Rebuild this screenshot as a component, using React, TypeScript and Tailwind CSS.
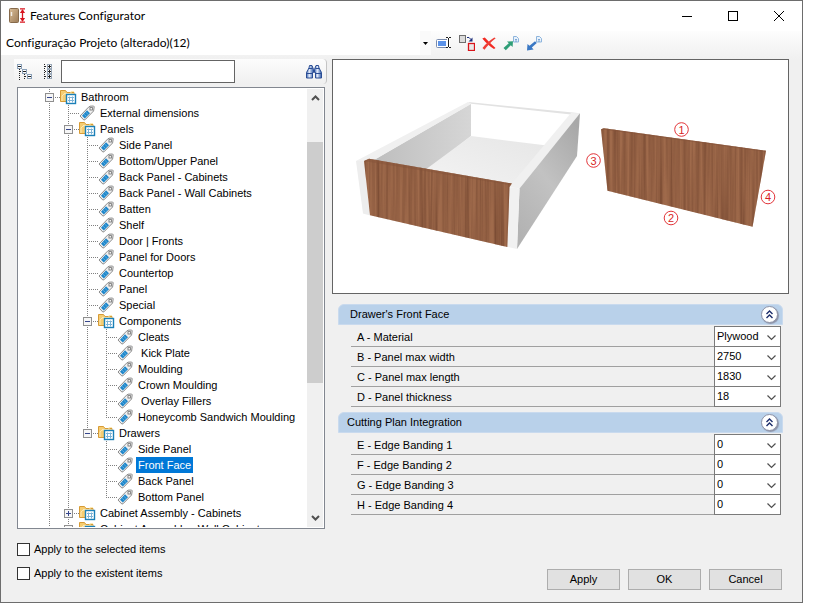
import { useState } from "react";

type Node = {
  label: string;
  // vertical guides drawn left of the node, one flag per parent level
  guides: boolean[];
  kind: "folder" | "item";
  open?: boolean;
  last?: boolean;
};

const item = (label: string, guides: boolean[], last = false): Node => ({
  label,
  guides,
  kind: "item",
  last,
});

const nodes: Node[] = [
  { label: "Bathroom", guides: [], kind: "folder", open: true },
  item("External dimensions", [true]),
  { label: "Panels", guides: [true], kind: "folder", open: true },
  item("Side Panel", [true, true]),
  item("Bottom/Upper Panel", [true, true]),
  item("Back Panel - Cabinets", [true, true]),
  item("Back Panel - Wall Cabinets", [true, true]),
  item("Batten", [true, true]),
  item("Shelf", [true, true]),
  item("Door | Fronts", [true, true]),
  item("Panel for Doors", [true, true]),
  item("Countertop", [true, true]),
  item("Panel", [true, true]),
  item("Special", [true, true]),
  { label: "Components", guides: [true, true], kind: "folder", open: true },
  item("Cleats", [true, true, true]),
  item("\u00a0Kick Plate", [true, true, true]),
  item("Moulding", [true, true, true]),
  item("Crown Moulding", [true, true, true]),
  item("\u00a0Overlay Fillers", [true, true, true]),
  item("Honeycomb Sandwich Moulding", [true, true, true], true),
  { label: "Drawers", guides: [true, true], kind: "folder", open: true, last: true },
  item("Side Panel", [true, true, false]),
  item("Front Face", [true, true, false]),
  item("Back Panel", [true, true, false]),
  item("Bottom Panel", [true, true, false], true),
  { label: "Cabinet Assembly - Cabinets", guides: [true], kind: "folder", open: false },
  { label: "Cabinet Assembly - Wall Cabinets", guides: [true], kind: "folder", open: false },
];

const groups = [
  {
    title: "\u00a0Drawer's Front Face",
    fields: [
      { label: "A - Material", value: "Plywood" },
      { label: "B - Panel max width", value: "2750" },
      { label: "C - Panel max length", value: "1830" },
      { label: "D - Panel thickness", value: "18" },
    ],
  },
  {
    title: "Cutting Plan Integration",
    fields: [
      { label: "E - Edge Banding 1", value: "0" },
      { label: "F - Edge Banding 2", value: "0" },
      { label: "G - Edge Banding 3", value: "0" },
      { label: "H - Edge Banding 4", value: "0" },
    ],
  },
];

const AppIcon = () => (
  <svg width="17" height="16" viewBox="0 0 17 16">
    <defs>
      <linearGradient id="door" x1="0" y1="0" x2="1" y2="1">
        <stop offset="0" stopColor="#d9bd97" />
        <stop offset="1" stopColor="#9c7c58" />
      </linearGradient>
    </defs>
    <rect x="0.5" y="0.5" width="9" height="14" rx="1" fill="url(#door)" stroke="#866a4b" />
    <path d="M2.5 4v4" stroke="#f3efe8" strokeWidth="1.4" />
    <path d="M11 .8h5M11 14.2h5M13.5 2v11" stroke="#d8141e" strokeWidth="1.3" />
    <path d="M13.5 1.3l2.6 3.6h-5.2zM13.5 13.7l2.6-3.6h-5.2z" fill="#d8141e" />
  </svg>
);

const FolderIcon = () => (
  <svg width="17" height="16" viewBox="0 0 17 16" className="shrink-0">
    <path d="M.5 12.500V1.500h5l1.500 2h7v9z" fill="#f6cd72" stroke="#d79b35" />
    <path d="M4 4.500h7v-2h3M2 12V7l2-2h10" fill="none" stroke="#fbe9b4" />
    <rect x="6.500" y="5.500" width="9" height="9" fill="#fff" stroke="#1b80b8" strokeWidth="1.400" />
    <path d="M8 8.500h6M8 11.500h6M9.500 7.500v6M12.500 7.500v6" stroke="#7fb4d6" strokeWidth="1" />
  </svg>
);

const TagIcon = () => (
  <svg width="16" height="16" viewBox="0 0 16 16" className="shrink-0">
    <path
      d="M1 11L9.500 2.200l1.500-1 3.600-.2 .6 .8-.6 4.200L6 14.800l-1.200 .2z"
      fill="#efefef"
      stroke="#8d8d8d"
      strokeWidth="1"
    />
    <path d="M3 10.800L8 5.200l3 3L5.800 13.400z" fill="#2087ca" />
    <path d="M5.200 9.300l2.400 2.200M7 7.400l2.300 2.200" stroke="#7cc4ec" strokeWidth=".6" />
    <rect x="11" y="2.600" width="2.400" height="2.400" fill="#fff" stroke="#777" strokeWidth=".9" />
  </svg>
);

const BinocularsIcon = () => (
  <svg width="16" height="14" viewBox="0 0 16 14">
    <defs>
      <linearGradient id="barrel" x1="0" y1="0" x2="1" y2="0">
        <stop offset="0" stopColor="#3c66b0" />
        <stop offset=".4" stopColor="#e6eefc" />
        <stop offset="1" stopColor="#2f5aa6" />
      </linearGradient>
    </defs>
    <path d="M3.500 .5h2.500l1.500 4v3h-1v5.500h-6V7.500L3 3z" fill="url(#barrel)" stroke="#2a4d94" />
    <path d="M10 .5h2.500L13 3l2.500 4.500V13h-6V7.500h-1v-3z" fill="url(#barrel)" stroke="#2a4d94" />
    <path d="M2.500 3.500h4M9.500 3.500h4M1 8.500h5.500M9.500 8.500H15M7 5.500h2" stroke="#2a4d94" />
  </svg>
);

const RenameIcon = () => (
  <svg width="16" height="12" viewBox="0 0 16 12">
    <rect x=".5" y="2.500" width="12" height="8" rx="1" fill="#fff" stroke="#7a8cae" />
    <rect x="2" y="4" width="8" height="5" fill="#5b92e8" />
    <path d="M12.500 1v10" stroke="#fff" strokeWidth="3" />
    <path d="M10 .5h2M13 .5h2M10 10.500h2M13 10.500h2M12.500 1v9" fill="none" stroke="#222" />
  </svg>
);

const ReplaceIcon = () => (
  <svg width="16" height="16" viewBox="0 0 16 16">
    <rect x=".5" y=".5" width="6" height="7" fill="#dcdcdc" stroke="#6f6f6f" />
    <path d="M8 2.500h2l2 2" stroke="#1d2f7c" fill="none" />
    <path d="M13.500 2.500v4h-4z" fill="#1d2f7c" />
    <rect x="9.500" y="8.500" width="6" height="7" fill="#e9e9e9" stroke="#d9141a" strokeWidth="1.300" />
  </svg>
);

const DeleteIcon = () => (
  <svg width="14" height="13" viewBox="0 0 14 13">
    <path d="M.3 1.500L2.800 .4C6 4 9.500 7.500 13.500 11l-1.500 1C8 9.500 4 6 .3 1.500z" fill="#f22a22" />
    <path d="M13.700 1.200L12.300 .4C8 3 3.500 7 .5 11l2 1.700C5 9 9 4.800 13.700 1.200z" fill="#ee3f37" />
  </svg>
);

const PageArrow = ({ color, inward }: { color: string; inward?: boolean }) => (
  <svg width="16" height="15" viewBox="0 0 16 15">
    <path d="M10.500 .5h3l2 2v3.500h-5z" fill="#e8f1fb" stroke="#8db4dc" />
    <path d="M12 3.500h2M12 5h2" stroke="#5d94cd" strokeWidth=".8" />
    {inward ? (
      <path d="M9 5.200l1.800 1.800-5 4.400 1.800 2L1 14.500 1.500 8l2 1.800z" fill={color} />
    ) : (
      <path d="M.5 12L5.800 7.200 4 5.600l6-.4L9.600 11 7.800 9.300l-5 5z" fill={color} />
    )}
  </svg>
);

const TreeBranch = ({ node }: { node: Node }) => (
  <svg width="20" height="16" viewBox="0 0 20 16" shapeRendering="crispEdges">
    <path d={node.last ? "M9.500 0v9" : "M9.500 0v16"} stroke="#808080" strokeDasharray="1 1" />
    <path d="M9 8.500h11" stroke="#808080" strokeDasharray="1 1" />
    {node.kind === "folder" && (
      <>
        <rect x="5.500" y="4.500" width="8" height="8" fill="#f6f6f6" stroke="#8f8f8f" />
        <path d={node.open ? "M7 8.500h5" : "M7 8.500h5M9.500 6v5"} stroke="#36468c" />
      </>
    )}
  </svg>
);

const Tree = () => {
  const [selected, setSelected] = useState(23);
  return (
    <ul className="min-w-0 flex-1 overflow-hidden pl-[22px]" role="tree">
      {nodes.map((node, i) => (
        <li key={i} className="flex h-4 items-center" role="treeitem" aria-selected={i === selected}>
          {node.guides.map((on, level) => (
            <svg key={level} width="19" height="16" shapeRendering="crispEdges" className="shrink-0">
              {on && <path d="M9.500 0v16" stroke="#808080" strokeDasharray="1 1" />}
            </svg>
          ))}
          <span className="shrink-0">
            <TreeBranch node={node} />
          </span>
          {node.kind === "folder" ? <FolderIcon /> : <TagIcon />}
          <button
            onClick={() => setSelected(i)}
            className={`h-4 px-0.5 leading-4 whitespace-nowrap ${
              node.kind === "folder" ? "ml-0.5" : "ml-[3px]"
            } ${i === selected ? "bg-[#0078d7] text-white" : ""}`}
          >
            {node.label}
          </button>
        </li>
      ))}
    </ul>
  );
};

const ScrollBar = () => (
  <div className="mr-px flex w-4 shrink-0 flex-col bg-[#f0f0f0]">
    <button aria-label="Scroll up" className="flex h-[18px] items-center justify-center">
      <svg width="9" height="6" viewBox="0 0 9 6">
        <path d="M1 5l3.500-3.500L8 5" fill="none" stroke="#505050" strokeWidth="2" />
      </svg>
    </button>
    <div className="flex-[35]" />
    <div className="flex-[242] bg-[#cdcdcd]" />
    <div className="flex-[126]" />
    <button aria-label="Scroll down" className="flex h-[18px] items-center justify-center">
      <svg width="9" height="6" viewBox="0 0 9 6">
        <path d="M1 1l3.500 3.500L8 1" fill="none" stroke="#505050" strokeWidth="2" />
      </svg>
    </button>
  </div>
);

const marks = [
  { n: 1, x: 681.5, y: 129.5 },
  { n: 2, x: 671, y: 218 },
  { n: 3, x: 593.5, y: 160.5 },
  { n: 4, x: 768, y: 197 },
];

const Preview = () => (
  <svg viewBox="333 60 455 233" className="h-full w-full">
    <defs>
      <filter id="wood" x="0" y="0" width="1" height="1" colorInterpolationFilters="sRGB">
        <feTurbulence type="fractalNoise" baseFrequency="0.3 0.006" numOctaves="3" seed="4" />
        <feColorMatrix values="0 0 0 0 .46  0 0 0 0 .28  0 0 0 0 .19  1.500 0 0 0 -.45" />
        <feComposite in2="SourceGraphic" operator="in" result="grain" />
        <feMerge>
          <feMergeNode in="SourceGraphic" />
          <feMergeNode in="grain" />
        </feMerge>
      </filter>
      <linearGradient id="outer" x1=".8" y1="0" x2=".2" y2="1">
        <stop offset="0" stopColor="#a8a8a8" />
        <stop offset=".5" stopColor="#c2c2c2" />
        <stop offset="1" stopColor="#b2b2b2" />
      </linearGradient>
      <linearGradient id="inner" x1="0" y1="0" x2="1" y2="0">
        <stop offset="0" stopColor="#bdbdbd" />
        <stop offset="1" stopColor="#d6d6d6" />
      </linearGradient>
      <linearGradient id="floor" x1="0" y1="1" x2="1" y2="0">
        <stop offset="0" stopColor="#f3f3f3" />
        <stop offset="1" stopColor="#e6e6e6" />
      </linearGradient>
    </defs>
    <path d="M468 102L580 113.300 571 114.500 471 103.700z" fill="#e2e2e2" />
    <path d="M471 103.700L471 136 428 170 372 161z" fill="url(#inner)" />
    <path d="M471 136L547 145.500 512 184 425 170z" fill="url(#floor)" />
    <path d="M356 161L468 102 471 104 375 159.500 364 162z" fill="#f0f0f0" />
    <path d="M571 113L580 113.300 519.500 188.500 509 187z" fill="#f0f0f0" />
    <path d="M580 113.300L577 156 517 249 519.500 188.500z" fill="url(#outer)" />
    <path d="M356 161L364 161 370 215.500 363 213.500z" fill="#ededed" />
    <path d="M509 187L519.500 188.500 517 249 507 246.700z" fill="#f1f1f1" />
    <path
      d="M364 161L369 158.700 512 183.500 509.500 187 507.300 247 370 215.300z"
      fill="#9f6a4b"
      filter="url(#wood)"
    />
    <path d="M364 161L369 158.700 512 183.500 509.500 185z" fill="#85543a" fillOpacity=".5" />
    <path
      d="M601 129.300L604 128.300 766 150.700 752.500 226.700 607.500 190.700z"
      fill="#9f6a4b"
      filter="url(#wood)"
    />
    <path d="M601 129.300L604 128.300 766 150.700 765 151.800z" fill="#85543a" fillOpacity=".6" />
    {marks.map((m) => (
      <g key={m.n}>
        <circle cx={m.x} cy={m.y} r="6.800" fill="#fff" stroke="#e2353a" />
        <text x={m.x} y={m.y + 4} textAnchor="middle" fontSize="11" fill="#d81f26">
          {m.n}
        </text>
      </g>
    ))}
  </svg>
);

const Group = ({ title, fields }: (typeof groups)[number]) => (
  <section className="mb-[5px]">
    <header className="mb-px flex h-[21px] items-center justify-between rounded-t-md border border-[#c9daee] bg-[#b9d1ea] pr-1 pl-2">
      <h2>{title}</h2>
      <button
        aria-label={`Collapse ${title.trim()}`}
        className="flex size-[17px] items-center justify-center rounded-full border border-[#8d93a8] bg-white shadow-[1px_1px_1px_#8d93a8]"
      >
        <svg width="9" height="9" viewBox="0 0 9 9">
          <path d="M1.500 4l3-3 3 3M1.500 8l3-3 3 3" fill="none" stroke="#1c2d6b" strokeWidth="1.400" />
        </svg>
      </button>
    </header>
    <div className="mr-0.5 ml-[13px]">
      {fields.map((f, i) => (
        <div key={f.label} className={`flex ${i === 0 ? "h-[21px]" : "h-5"}`}>
          <label
            htmlFor={f.label}
            className="flex flex-1 items-center border-b border-[#a0a0a0] pt-0.5 pl-1.5"
          >
            {f.label}
          </label>
          <div
            className={`relative w-[67px] border-x border-b border-[#7a7a7a] bg-white ${
              i === 0 ? "border-t" : ""
            }`}
          >
            <select
              id={f.label}
              defaultValue={f.value}
              className="block h-[18px] w-full appearance-none bg-transparent pl-0.5 leading-[18px] outline-none"
            >
              <option>{f.value}</option>
            </select>
            <svg
              width="9"
              height="6"
              viewBox="0 0 9 6"
              className="pointer-events-none absolute top-2 right-1"
            >
              <path d="M.5 .5l4 4 4-4" fill="none" stroke="#505050" strokeWidth="1.200" />
            </svg>
          </div>
        </div>
      ))}
    </div>
  </section>
);

const App = () => {
  return (
    <div className="flex h-screen min-h-[560px] bg-white pr-[10px] pb-0.5 font-['Liberation_Sans',Arial,sans-serif] text-[11px] text-black">
      <div className="flex min-w-0 flex-1 flex-col border border-[#6d6d6d] bg-[#f0f0f0]">
        <div className="flex h-[30px] shrink-0 items-center bg-white pl-2">
          <AppIcon />
          <h1 className="ml-1 flex-1 font-[Lato,'Open_Sans',sans-serif] text-[12px] [font-variant-ligatures:none]">
            Features Configurator
          </h1>
          <button aria-label="Minimize" className="flex w-[46px] justify-center">
            <svg width="10" height="10" viewBox="0 0 10 10">
              <path d="M0 5.500h10" stroke="#000" />
            </svg>
          </button>
          <button aria-label="Maximize" className="flex w-[46px] justify-center">
            <svg width="10" height="10" viewBox="0 0 10 10">
              <rect x=".5" y=".5" width="9" height="9" fill="none" stroke="#000" />
            </svg>
          </button>
          <button aria-label="Close" className="flex w-[46px] justify-center">
            <svg width="10" height="10" viewBox="0 0 10 10">
              <path d="M0 0l10 10M10 0L0 10" stroke="#000" />
            </svg>
          </button>
        </div>

        <div className="flex h-7 shrink-0 items-start bg-linear-to-b from-[#fdfdfd] to-[#f0f0f0]">
          <div className="relative w-[430px]">
            <select
              aria-label="Configuration"
              className="block h-6 w-full appearance-none bg-white pl-[5px] font-[Lato,'Open_Sans',sans-serif] text-[12px] outline-none [font-variant-ligatures:none]"
            >
              <option>Configuração Projeto (alterado)(12)</option>
            </select>
            <span className="pointer-events-none absolute top-0 right-0 flex h-6 w-[11px] items-center justify-center bg-[#fafafa]">
              <svg width="5" height="3" viewBox="0 0 5 3">
                <path d="M0 0h5L2.500 3z" fill="#000" />
              </svg>
            </span>
          </div>
          <div className="flex h-6 items-center gap-[7px] pl-[5px]">
            <button aria-label="Rename"><RenameIcon /></button>
            <button aria-label="Replace"><ReplaceIcon /></button>
            <button aria-label="Delete"><DeleteIcon /></button>
            <button aria-label="Export"><PageArrow color="#2f9e77" /></button>
            <button aria-label="Import"><PageArrow color="#3a78c4" inward /></button>
          </div>
        </div>

        <div className="flex min-h-0 flex-1 gap-[5px] px-[13px]">
          <div className="flex w-[313px] shrink-0 flex-col">
            <div className="flex h-[25px] shrink-0 items-center rounded-r border-r border-[#c4c4c4] bg-linear-to-b from-[#fcfcfc] to-[#f0f0f0] pr-1">
              <button aria-label="Collapse tree" className="ml-[3px]">
                <svg width="15" height="16" viewBox="0 0 15 16" shapeRendering="crispEdges">
                  <path d="M2.500 5v11M7.500 10v6M3 7.500h3M8 12.500h3" stroke="#222" strokeDasharray="1 1" />
                  <path d="M.5 .5h4v4h-4zM5.500 5.500h4v4h-4zM10.500 10.500h4v4h-4z" fill="#fff" stroke="#8aa0b8" />
                  <path d="M1 2.500h3M6 7.500h3M11 12.500h3" stroke="#222" />
                </svg>
              </button>
              <button aria-label="Expand tree" className="ml-[11px]">
                <svg width="9" height="16" viewBox="0 0 9 16" shapeRendering="crispEdges">
                  <path d="M1.500 0v16M2 2.500h2M2 7.500h2M2 12.500h2" stroke="#222" strokeDasharray="1 1" />
                  <path d="M4.500 .5h4v4h-4zM4.500 5.500h4v4h-4zM4.500 10.500h4v4h-4z" fill="#fff" stroke="#9aa8b8" />
                  <path d="M5 2.500h3M6.500 1v3M5 7.500h3M6.500 6v3M5 12.500h3M6.500 11v3" stroke="#222" />
                </svg>
              </button>
              <input
                aria-label="Search"
                className="ml-[9px] h-[23px] w-[174px] border border-[#646464] bg-white px-1 outline-none"
              />
              <button aria-label="Find" className="ml-auto">
                <BinocularsIcon />
              </button>
            </div>
            <div className="mt-[3px] mr-0.5 ml-[3px] flex min-h-0 flex-1 border border-[#828790] bg-white py-px">
              <Tree />
              <ScrollBar />
            </div>
            <div className="flex h-[73px] shrink-0 flex-col gap-2 pt-3 pl-[3px]">
              {["Apply to the selected items", "Apply to the existent items"].map((text) => (
                <label key={text} className="flex h-4 items-center gap-1">
                  <input
                    type="checkbox"
                    className="size-[13px] appearance-none border border-[#333] bg-white checked:bg-[#0078d7]"
                  />
                  {text}
                </label>
              ))}
            </div>
          </div>

          <div className="flex min-w-0 flex-1 flex-col">
            <div className="h-[235px] shrink-0 border border-[#646464] bg-white">
              <Preview />
            </div>
            <div className="mt-2.5 mr-1.5 ml-1.5">
              {groups.map((g) => (
                <Group key={g.title} {...g} />
              ))}
            </div>
            <div className="mt-auto mr-[7px] mb-3 flex justify-end gap-2">
              {["Apply", "OK", "Cancel"].map((text) => (
                <button
                  key={text}
                  className="h-[21px] w-[73px] border border-[#adadad] bg-[#e1e1e1]"
                >
                  {text}
                </button>
              ))}
            </div>
          </div>
        </div>
      </div>
    </div>
  );
};

export default App;
